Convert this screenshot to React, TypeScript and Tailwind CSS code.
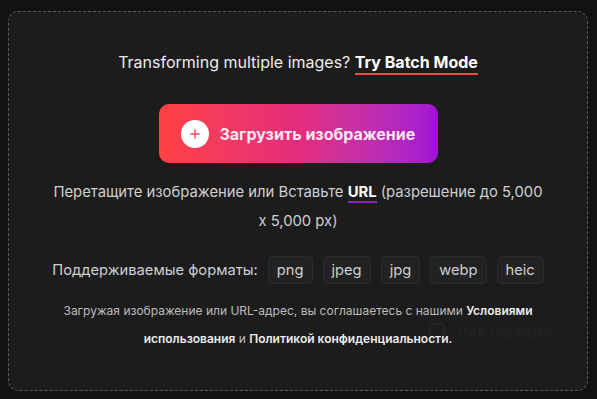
import { Plus } from "lucide-react";

const formats = ["png", "jpeg", "jpg", "webp", "heic"];

export default function App() {
  return (
    <div
      className="h-[399px] w-full bg-[#111214] pt-[11px] pl-[8px] pr-[9px] pb-[8px]"
      style={{ fontFamily: "Inter, 'Noto Sans', sans-serif" }}
    >
      <div className="relative h-[380px] w-[580px] rounded-[10px] border border-dashed border-[#5a5a5c] bg-[#1c1c1c] flex flex-col items-center pt-[38px]">
        <div className="absolute left-[420px] top-[311px] flex items-center gap-[13px] text-[#262627]">
          <svg width="16" height="23" viewBox="0 0 16 23" fill="none" stroke="currentColor" strokeWidth="1.5">
            <rect x="1" y="1" width="14" height="13" rx="3" />
            <path d="M3.5 14l4.5 7 4.5-7" />
          </svg>
          <span className="text-[13px] font-light tracking-[0.8px]">ПАРТНЕРКИН</span>
        </div>

        <p className="relative text-[16px] leading-[24px] text-[#ececec]">
          Transforming multiple images?{" "}
          <span className="font-bold text-white border-b-2 border-[#ef4a4a] pb-[1px]">Try Batch Mode</span>
        </p>

        <button className="relative mt-[30px] h-[59px] w-[279px] rounded-[10px] bg-gradient-to-r from-[#ff4141] via-[#e42c7c] to-[#a20fd6] flex items-center pl-[22px] gap-[11px]">
          <span className="h-[28px] w-[28px] rounded-full bg-white flex items-center justify-center">
            <Plus className="h-[14px] w-[14px] text-[#f04a5a]" strokeWidth={2.5} />
          </span>
          <span className="text-[16px] font-bold text-[#ffe6f2]">Загрузить изображение</span>
        </button>

        <p className="relative mt-[15px] max-w-[495px] text-center text-[14.8px] leading-[29px] text-[#cfcfcf]">
          Перетащите изображение или Вставьте{" "}
          <span className="font-bold text-white border-b-2 border-[#8a22c4]">URL</span> (разрешение до 5,000 x 5,000 px)
        </p>

        <div className="relative mt-[20px] flex items-center gap-[10px] text-[14.7px] text-[#cfcfcf]">
          <span>Поддерживаемые форматы:</span>
          {formats.map((f) => (
            <span
              key={f}
              className="h-[28px] px-[8px] flex items-center rounded-[4px] border border-[#2a2a2a] bg-[#222222]"
            >
              {f}
            </span>
          ))}
        </div>

        <p className="relative mt-[13px] max-w-[470px] text-center text-[12px] leading-[28px] text-[#bdbdbd]">
          Загружая изображение или URL-адрес, вы соглашаетесь с нашими{" "}
          <span className="font-semibold text-[#ececec]">Условиями использования</span> и{" "}
          <span className="font-semibold text-[#ececec]">Политикой конфиденциальности.</span>
        </p>
      </div>
    </div>
  );
}
